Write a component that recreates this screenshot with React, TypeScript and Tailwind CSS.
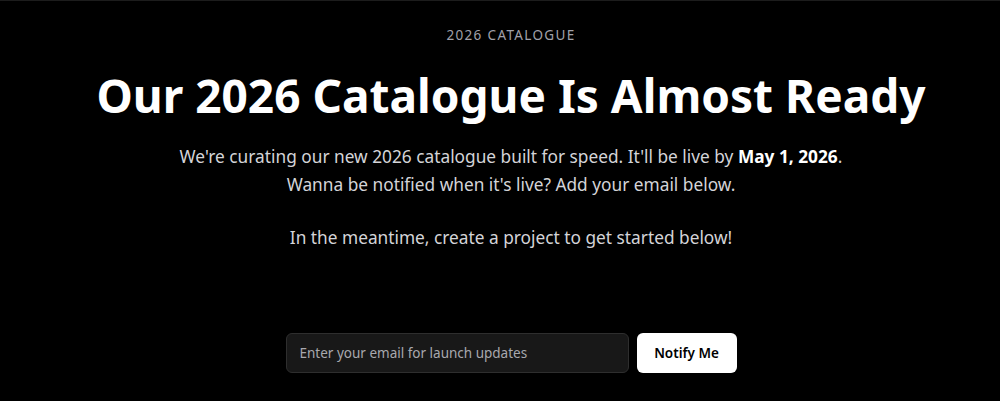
import React from "react";

export default function App() {
  return (
    <div
      className="min-h-[401px] w-full bg-black border-t border-[#1c1c1c] flex flex-col items-center text-center pl-[22px]"
      style={{ fontFamily: '"Noto Sans", "Open Sans", sans-serif' }}
    >
      <div className="mt-[24px] text-[13.5px] leading-[20px] tracking-[0.1em] text-[#a1a1aa]">
        2026 CATALOGUE
      </div>
      <h1 className="mt-[22px] text-[46px] leading-[56px] font-bold text-white">
        Our 2026 Catalogue Is Almost Ready
      </h1>
      <p className="mt-[20px] text-[17.3px] leading-[28px] text-[#d4d4d8]">
        We're curating our new 2026 catalogue built for speed. It'll be live by{" "}
        <span className="font-bold text-white">May 1, 2026</span>.
        <br />
        Wanna be notified when it's live? Add your email below.
      </p>
      <p className="mt-[25px] text-[17.3px] leading-[28px] text-[#d4d4d8]">
        In the meantime, create a project to get started below!
      </p>
      <div className="mt-[81px] flex items-center gap-[8px]">
        <input
          type="email"
          placeholder="Enter your email for launch updates"
          className="w-[343px] h-[40px] rounded-md border border-[#2e2e2e] bg-[#181818] px-[13px] text-[13.5px] text-white placeholder:text-[#a8a8ae] outline-none"
        />
        <button className="h-[40px] w-[100px] rounded-md bg-white text-[13.5px] font-semibold text-black">
          Notify Me
        </button>
      </div>
    </div>
  );
}
